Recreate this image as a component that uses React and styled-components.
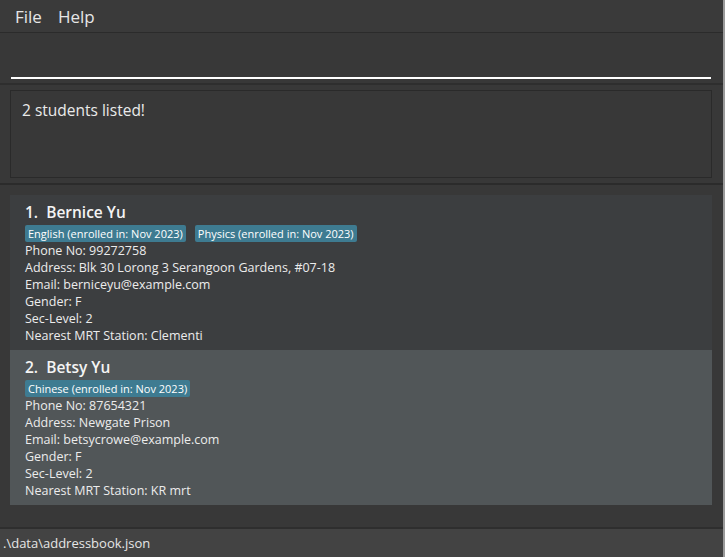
import React from "react";
import styled, { createGlobalStyle } from "styled-components";

const GlobalStyle = createGlobalStyle`
  html, body {
    margin: 0;
    padding: 0;
    background: #383838;
  }
  body {
    font-family: "Open Sans", "Noto Sans", sans-serif;
  }
`;

const students = [
  {
    name: "Bernice Yu",
    tags: ["English (enrolled in: Nov 2023)", "Physics (enrolled in: Nov 2023)"],
    phone: "99272758",
    address: "Blk 30 Lorong 3 Serangoon Gardens, #07-18",
    email: "berniceyu@example.com",
    gender: "F",
    level: "2",
    mrt: "Clementi",
  },
  {
    name: "Betsy Yu",
    tags: ["Chinese (enrolled in: Nov 2023)"],
    phone: "87654321",
    address: "Newgate Prison",
    email: "betsycrowe@example.com",
    gender: "F",
    level: "2",
    mrt: "KR mrt",
  },
];

const Window = styled.div`
  width: 725px;
  height: 557px;
  display: flex;
  flex-direction: column;
  background: #383838;
  border-right: 2px solid #9a9a9a;
  box-sizing: border-box;
  overflow: hidden;
`;

const MenuBar = styled.div`
  height: 32px;
  flex-shrink: 0;
  display: flex;
  align-items: center;
  gap: 16px;
  padding-left: 15px;
  background: #3a3a3a;
  border-bottom: 1px solid #2b2b2b;
`;

const MenuItem = styled.span`
  color: #e6e6e6;
  font-size: 17px;
`;

const CommandArea = styled.div`
  height: 52px;
  flex-shrink: 0;
  box-sizing: border-box;
  padding: 0 12px 4px 11px;
  display: flex;
  align-items: flex-end;
  border-bottom: 2px solid #2e2e2e;
`;

const CommandInput = styled.div`
  flex: 1;
  height: 2px;
  background: #ffffff;
`;

const ResultArea = styled.div`
  height: 100px;
  flex-shrink: 0;
  padding: 5px 11px 5px 10px;
  box-sizing: border-box;
  border-bottom: 2px solid #2b2b2b;
`;

const ResultBox = styled.div`
  height: 100%;
  box-sizing: border-box;
  border: 1px solid #2a2a2a;
  padding: 8px 11px;
  color: #eaeaea;
  font-size: 15.5px;
`;

const ListArea = styled.div`
  flex: 1;
  padding: 10px 11px 0 10px;
  display: flex;
  flex-direction: column;
`;

const Card = styled.div`
  background: ${(p) => (p.$selected ? "#515658" : "#3c3e40")};
  padding: 7px 15px 5px;
  height: 155px;
  flex-shrink: 0;
  box-sizing: border-box;
  color: #ececec;
  font-size: 12.5px;
`;

const Name = styled.div`
  font-size: 15.5px;
  font-weight: 600;
  color: #f4f4f4;
  line-height: 21px;
  white-space: pre;
`;

const Tags = styled.div`
  display: flex;
  gap: 9px;
  margin: 2px 0 0;
`;

const Tag = styled.span`
  background: #3e7b91;
  color: #ffffff;
  font-size: 11px;
  line-height: 17px;
  padding: 0 3px;
  border-radius: 2px;
`;

const Line = styled.div`
  line-height: 17px;
`;

const StatusBar = styled.div`
  height: 28px;
  flex-shrink: 0;
  background: #434343;
  border-top: 2px solid #2e2e2e;
  display: flex;
  align-items: center;
  padding-left: 3px;
  color: #e6e6e6;
  font-size: 13px;
`;

const StudentCard = ({ index, s, selected }) => (
  <Card $selected={selected}>
    <Name>{`${index}.  ${s.name}`}</Name>
    <Tags>
      {s.tags.map((t) => (
        <Tag key={t}>{t}</Tag>
      ))}
    </Tags>
    <Line>Phone No: {s.phone}</Line>
    <Line>Address: {s.address}</Line>
    <Line>Email: {s.email}</Line>
    <Line>Gender: {s.gender}</Line>
    <Line>Sec-Level: {s.level}</Line>
    <Line>Nearest MRT Station: {s.mrt}</Line>
  </Card>
);

export default function App() {
  return (
    <>
      <GlobalStyle />
      <Window>
        <MenuBar>
          <MenuItem>File</MenuItem>
          <MenuItem>Help</MenuItem>
        </MenuBar>
        <CommandArea>
          <CommandInput />
        </CommandArea>
        <ResultArea>
          <ResultBox>2 students listed!</ResultBox>
        </ResultArea>
        <ListArea>
          {students.map((s, i) => (
            <StudentCard key={s.name} index={i + 1} s={s} selected={i === 1} />
          ))}
        </ListArea>
        <StatusBar>.\data\addressbook.json</StatusBar>
      </Window>
    </>
  );
}
